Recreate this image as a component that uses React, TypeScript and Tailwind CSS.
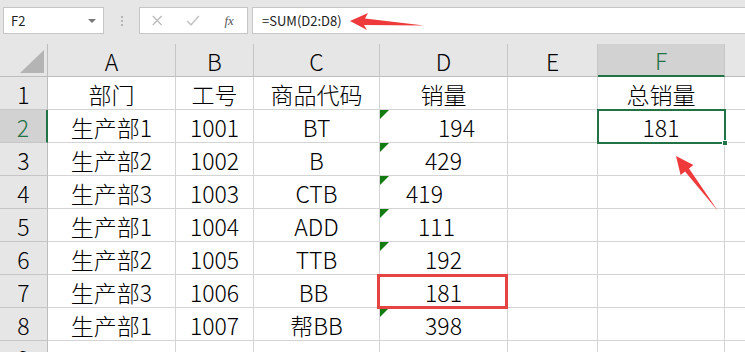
import { Fragment } from "react";

const cols = ["A", "B", "C", "D", "E", "F"];
const gridCols = "grid-cols-[48px_128px_78px_126px_128px_90px_127px_1fr]";

type Cell = { text: string; shift?: string; flag?: boolean };

const rows: Cell[][] = [
  [{ text: "部门" }, { text: "工号" }, { text: "商品代码" }, { text: "销量" }, { text: "" }, { text: "总销量" }],
  [{ text: "生产部1" }, { text: "1001" }, { text: "BT" }, { text: "194", shift: "pl-[26px]", flag: true }, { text: "" }, { text: "181" }],
  [{ text: "生产部2" }, { text: "1002" }, { text: "B" }, { text: "429", flag: true }, { text: "" }, { text: "" }],
  [{ text: "生产部3" }, { text: "1003" }, { text: "CTB" }, { text: "419", shift: "pr-[38px]", flag: true }, { text: "" }, { text: "" }],
  [{ text: "生产部1" }, { text: "1004" }, { text: "ADD" }, { text: "111", shift: "pr-[14px]", flag: true }, { text: "" }, { text: "" }],
  [{ text: "生产部2" }, { text: "1005" }, { text: "TTB" }, { text: "192", flag: true }, { text: "" }, { text: "" }],
  [{ text: "生产部3" }, { text: "1006" }, { text: "BB", shift: "pr-[6px]" }, { text: "181" }, { text: "" }, { text: "" }],
  [{ text: "生产部1" }, { text: "1007" }, { text: "帮BB" }, { text: "398", flag: true }, { text: "" }, { text: "" }],
  [{ text: "" }, { text: "" }, { text: "" }, { text: "" }, { text: "" }, { text: "" }],
];

const font = { fontFamily: '"Noto Sans CJK SC", "Noto Sans", sans-serif' };

export default function App() {
  return (
    <div className="relative h-[352px] w-[745px] overflow-hidden bg-white text-black" style={font}>
      {/* formula bar */}
      <div className="flex h-[44px] items-start gap-1 bg-[#e6e6e6] pt-[7px] pl-[3px]">
        <div className="flex h-[27px] w-[101px] items-center justify-between border border-[#c6c6c6] bg-white pl-[7px] pr-[7px] text-[13px] text-[#222]">
          <span>F2</span>
          <span className="h-0 w-0 border-x-[4px] border-t-[4px] border-x-transparent border-t-[#777]" />
        </div>
        <div className="flex h-[27px] w-[27px] flex-col items-center justify-center gap-[2px]">
          <span className="h-[2px] w-[2px] bg-[#b5b5b5]" />
          <span className="h-[2px] w-[2px] bg-[#b5b5b5]" />
          <span className="h-[2px] w-[2px] bg-[#b5b5b5]" />
        </div>
        <div className="flex h-[27px] w-[109px] items-center border border-[#c6c6c6] bg-white">
          <svg width="109" height="27" viewBox="0 0 109 27">
            <path d="M13 9 L22 18 M22 9 L13 18" stroke="#bdbdbd" strokeWidth="1.4" />
            <path d="M48 14 L52 18 L60 9" stroke="#c4c4c4" strokeWidth="1.6" fill="none" />
            <text x="86" y="18" fontSize="13" fontStyle="italic" fill="#555" fontFamily="Liberation Serif, serif">fx</text>
          </svg>
        </div>
        <div className="flex h-[27px] flex-1 items-center border border-r-0 border-[#c6c6c6] bg-white pl-[9px] text-[13px] text-[#222]">
          =SUM(D2:D8)
        </div>
      </div>

      {/* sheet */}
      <div className={`grid ${gridCols} auto-rows-[33px] font-light`}>
        <div className="relative border-r border-b border-[#bdbdbd] bg-[#e6e6e6]">
          <svg className="absolute left-[20px] top-[6px]" width="24" height="23" viewBox="0 0 24 23">
            <path d="M24 0 L24 23 L0 23 Z" fill="#b4b4b4" />
          </svg>
        </div>
        {cols.map((c) => (
          <div
            key={c}
            className={`flex items-center justify-center border-r border-[#c6c6c6] pt-[2px] text-[23px] ${
              c === "F"
                ? "border-b-2 border-b-[#217346] bg-[#d2d2d2] text-[#217346]"
                : "border-b border-b-[#bdbdbd] bg-[#e6e6e6]"
            }`}
          >
            {c}
          </div>
        ))}
        <div className="border-b border-[#bdbdbd] bg-[#e6e6e6]" />

        {rows.map((row, r) => (
          <Fragment key={r}>
            <div
              className={`flex items-center justify-center border-b border-[#c6c6c6] pt-[2px] text-[23px] ${
                r === 1
                  ? "border-r-2 border-r-[#217346] bg-[#d2d2d2] text-[#217346]"
                  : "border-r border-r-[#bdbdbd] bg-[#e6e6e6]"
              }`}
            >
              {r + 1}
            </div>
            {row.map((cell, i) => (
              <div
                key={i}
                className={`relative flex items-center justify-center border-r border-b border-[#d4d4d4] pt-[2px] text-[23px] whitespace-nowrap ${cell.shift ?? ""}`}
              >
                {cell.flag && (
                  <span className="absolute left-0 top-0 h-0 w-0 border-t-[9px] border-r-[9px] border-t-[#127c12] border-r-transparent" />
                )}
                {cell.text}
              </div>
            ))}
            <div className="border-b border-[#d4d4d4]" />
          </Fragment>
        ))}
      </div>

      {/* F2 selection */}
      <div className="pointer-events-none absolute left-[597px] top-[109px] h-[35px] w-[129px] border-2 border-[#217346]">
        <span className="absolute -bottom-[4px] -right-[4px] h-[6px] w-[6px] border border-white bg-[#217346]" />
      </div>

      {/* red box on D7 */}
      <div className="pointer-events-none absolute left-[377px] top-[274px] h-[35px] w-[131px] border-[3px] border-[#e64343]" />

      {/* arrows */}
      <svg className="pointer-events-none absolute left-0 top-0" width="745" height="352" viewBox="0 0 745 352">
        <path d="M350 21 L368 13 L365 18.5 L424 25.5 L364 25 L367 30 Z" fill="#ee3a3a" />
        <path d="M676 156 L693.4 165 L689 168.5 L718 211 L685 171.5 L680.6 175 Z" fill="#ee3a3a" />
      </svg>
    </div>
  );
}
